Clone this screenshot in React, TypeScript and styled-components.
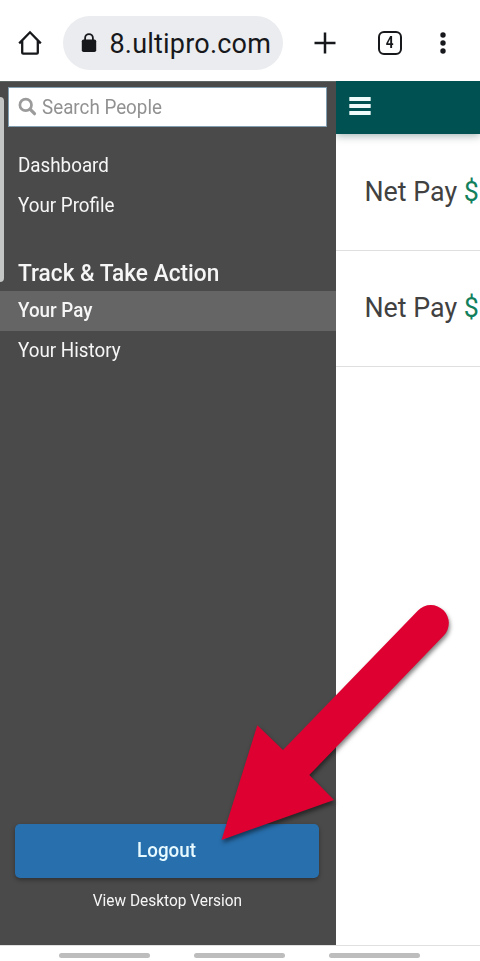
import React from "react";
import styled, { createGlobalStyle } from "styled-components";

const GlobalStyle = createGlobalStyle`
  *, *::before, *::after { box-sizing: border-box; }
  body { margin: 0; background: #fff; font-family: Roboto, "Liberation Sans", sans-serif; }
`;

const Screen = styled.div`
  position: relative;
  display: flex;
  flex-direction: column;
  width: 480px;
  height: 961px;
  overflow: hidden;
  background: #fff;
`;

const BrowserBar = styled.header`
  display: flex;
  align-items: center;
  flex: 0 0 81px;
  padding: 4px 24px 0 18px;
  color: #17181b;
`;

const HomeIcon = styled.svg`
  width: 24px;
  height: 26px;
  margin-right: 20.5px;
`;

const AddressPill = styled.div`
  display: flex;
  align-items: center;
  width: 220px;
  height: 54px;
  padding-left: 18.5px;
  border-radius: 27px;
  background: #ebecef;
`;

const LockIcon = styled.svg`
  width: 16px;
  height: 20px;
  margin-right: 12.5px;
`;

const Address = styled.span`
  font-size: 27px;
  line-height: 32px;
  letter-spacing: 0.2px;
  padding-top: 2px;
  white-space: nowrap;
`;

const PlusIcon = styled.svg`
  width: 22px;
  height: 22px;
  margin-left: 31.5px;
`;

const TabCount = styled.div`
  display: flex;
  align-items: center;
  justify-content: center;
  width: 24px;
  height: 24px;
  margin-left: 41.5px;
  border: 2.5px solid currentColor;
  border-radius: 6px;
  font-size: 16px;
  font-weight: 700;

  span {
    transform: scaleX(0.85);
  }
`;

const MoreIcon = styled.svg`
  width: 6px;
  height: 22px;
  margin-left: 38.5px;
`;

const Viewport = styled.div`
  display: flex;
  flex: 0 0 864px;
`;

const Sidebar = styled.aside`
  position: relative;
  display: flex;
  flex-direction: column;
  width: 336px;
  background: #4a4a4a;
  border-top: 1px solid #5d6565;
  color: #f6f6f6;
`;

/* Slightly condensed lettering used throughout the drawer. */
const Label = styled.span<{ $centered?: boolean }>`
  display: inline-block;
  transform: scaleX(0.964);
  transform-origin: ${(p) => (p.$centered ? "center" : "left")};
`;

const ScrollThumb = styled.div`
  position: absolute;
  left: -5px;
  top: 15px;
  width: 9px;
  height: 185px;
  border-radius: 4px;
  background: #c4c5c5;
`;

const SearchBox = styled.div`
  display: flex;
  align-items: center;
  height: 40px;
  margin: 5px 9px 0 8px;
  padding-left: 9px;
  border: 1px solid #829fb1;
  background: #fff;
  color: #919191;
  font-size: 19.5px;
`;

const SearchIcon = styled.svg`
  width: 19px;
  height: 19px;
  margin: -2px 5px 0 0;
`;

const Menu = styled.nav<{ $top: number }>`
  display: flex;
  flex-direction: column;
  margin-top: ${(p) => p.$top}px;
`;

const MenuItem = styled.a<{ $active?: boolean }>`
  height: 40px;
  padding-left: 18px;
  line-height: 40px;
  font-size: 19.5px;
  font-weight: ${(p) => (p.$active ? 500 : 400)};
  background: ${(p) => (p.$active ? "#656565" : "transparent")};
`;

const SectionTitle = styled.h2`
  height: 36px;
  margin: 0;
  padding-left: 18px;
  font-size: 23.5px;
  font-weight: 500;
  line-height: 36px;
`;

const LogoutButton = styled.button`
  height: 54px;
  margin: auto 17px 0 15px;
  padding: 0;
  border: 0;
  border-radius: 5px;
  background: #286fad;
  box-shadow: 0 2px 4px rgba(0, 0, 0, 0.35);
  color: #e7faff;
  font: 500 19.5px/52px Roboto, sans-serif;
`;

const DesktopLink = styled.a`
  height: 67px;
  padding-top: 12px;
  padding-right: 2px;
  font-size: 16px;
  line-height: 22px;
  text-align: center;
`;

const Content = styled.main`
  flex: 1;
  overflow: hidden;
  background: #fff;
`;

const AppBar = styled.div`
  height: 53px;
  padding: 16px 0 0 13px;
  background: #005152;
  box-shadow: 0 2px 8px rgba(0, 45, 45, 0.35);
`;

const HamburgerIcon = styled.svg`
  display: block;
  width: 22px;
  height: 18px;
`;

const PayRow = styled.div`
  display: flex;
  align-items: center;
  height: 116.5px;
  padding-left: 28.5px;
  border-bottom: 1px solid #dfdfdf;
  color: #414141;
  font-size: 26.8px;
  white-space: pre;
`;

const Amount = styled.span`
  color: #13805d;
`;

const SystemBar = styled.footer`
  display: flex;
  justify-content: center;
  gap: 44.5px;
  height: 16px;
  padding: 7px 1px 0 0;
  border-top: 1px solid #e0e0e0;
`;

const NavHandle = styled.span`
  width: 90.5px;
  height: 5px;
  border-radius: 3px;
  background: #bdbdbd;
`;

const PointerArrow = styled.svg`
  position: absolute;
  left: 210px;
  top: 595px;
  width: 250px;
  height: 260px;
  filter: drop-shadow(1px 3px 2px rgba(0, 0, 0, 0.5));
`;

export default function App() {
  return (
    <Screen>
      <GlobalStyle />
      <BrowserBar>
        <HomeIcon viewBox="0 0 24 26" fill="none" stroke="currentColor" strokeWidth="2.3">
          <path d="M1.2 13.4 12 2.3l10.8 11.1M4.2 11v11.7q0 1 1 1h13.6q1 0 1-1V11" />
        </HomeIcon>
        <AddressPill>
          <LockIcon viewBox="0 0 16 20">
            <path d="M4.1 8V5a3.9 3.9 0 0 1 7.8 0v3" fill="none" stroke="currentColor" strokeWidth="1.8" />
            <rect x="0.8" y="6.5" width="14.4" height="12.5" rx="1.8" fill="currentColor" />
          </LockIcon>
          <Address>8.ultipro.com</Address>
        </AddressPill>
        <PlusIcon viewBox="0 0 22 22" stroke="currentColor" strokeWidth="2.5">
          <path d="M11 .5v21M.5 11h21" />
        </PlusIcon>
        <TabCount><span>4</span></TabCount>
        <MoreIcon viewBox="0 0 6 22" fill="currentColor">
          <circle cx="3" cy="3" r="2.7" />
          <circle cx="3" cy="11" r="2.7" />
          <circle cx="3" cy="19" r="2.7" />
        </MoreIcon>
      </BrowserBar>
      <Viewport>
        <Sidebar>
          <ScrollThumb />
          <SearchBox>
            <SearchIcon viewBox="0 0 19 19" fill="none" stroke="#9b9b9b" strokeLinecap="round">
              <circle cx="7.7" cy="7.9" r="5.8" strokeWidth="2.7" />
              <path d="m12.5 12.7 4 4" strokeWidth="3.2" />
            </SearchIcon>
            <Label>Search People</Label>
          </SearchBox>
          <Menu $top={19}>
            <MenuItem><Label>Dashboard</Label></MenuItem>
            <MenuItem><Label>Your Profile</Label></MenuItem>
          </Menu>
          <Menu $top={29}>
            <SectionTitle><Label>Track &amp; Take Action</Label></SectionTitle>
            <MenuItem $active><Label>Your Pay</Label></MenuItem>
            <MenuItem><Label>Your History</Label></MenuItem>
          </Menu>
          <LogoutButton><Label $centered>Logout</Label></LogoutButton>
          <DesktopLink><Label $centered>View Desktop Version</Label></DesktopLink>
        </Sidebar>
        <Content>
          <AppBar>
            <HamburgerIcon viewBox="0 0 22 18" fill="#effbfb">
              <rect x=".3" width="21.4" height="4" rx=".6" />
              <rect x=".3" y="7" width="21.4" height="4" rx=".6" />
              <rect x=".3" y="14" width="21.4" height="4" rx=".6" />
            </HamburgerIcon>
          </AppBar>
          <PayRow>Net Pay <Amount>$</Amount></PayRow>
          <PayRow>Net Pay <Amount>$</Amount></PayRow>
        </Content>
      </Viewport>
      <SystemBar>
        <NavHandle />
        <NavHandle />
        <NavHandle />
      </SystemBar>
      <PointerArrow viewBox="210 595 250 260">
        <path
          d="M221.5 840 257.3 725.3 283 750 418 610.4A18 18 0 0 1 443.6 635.8L309.3 775 334 800Z"
          fill="#de0031"
        />
      </PointerArrow>
    </Screen>
  );
}
